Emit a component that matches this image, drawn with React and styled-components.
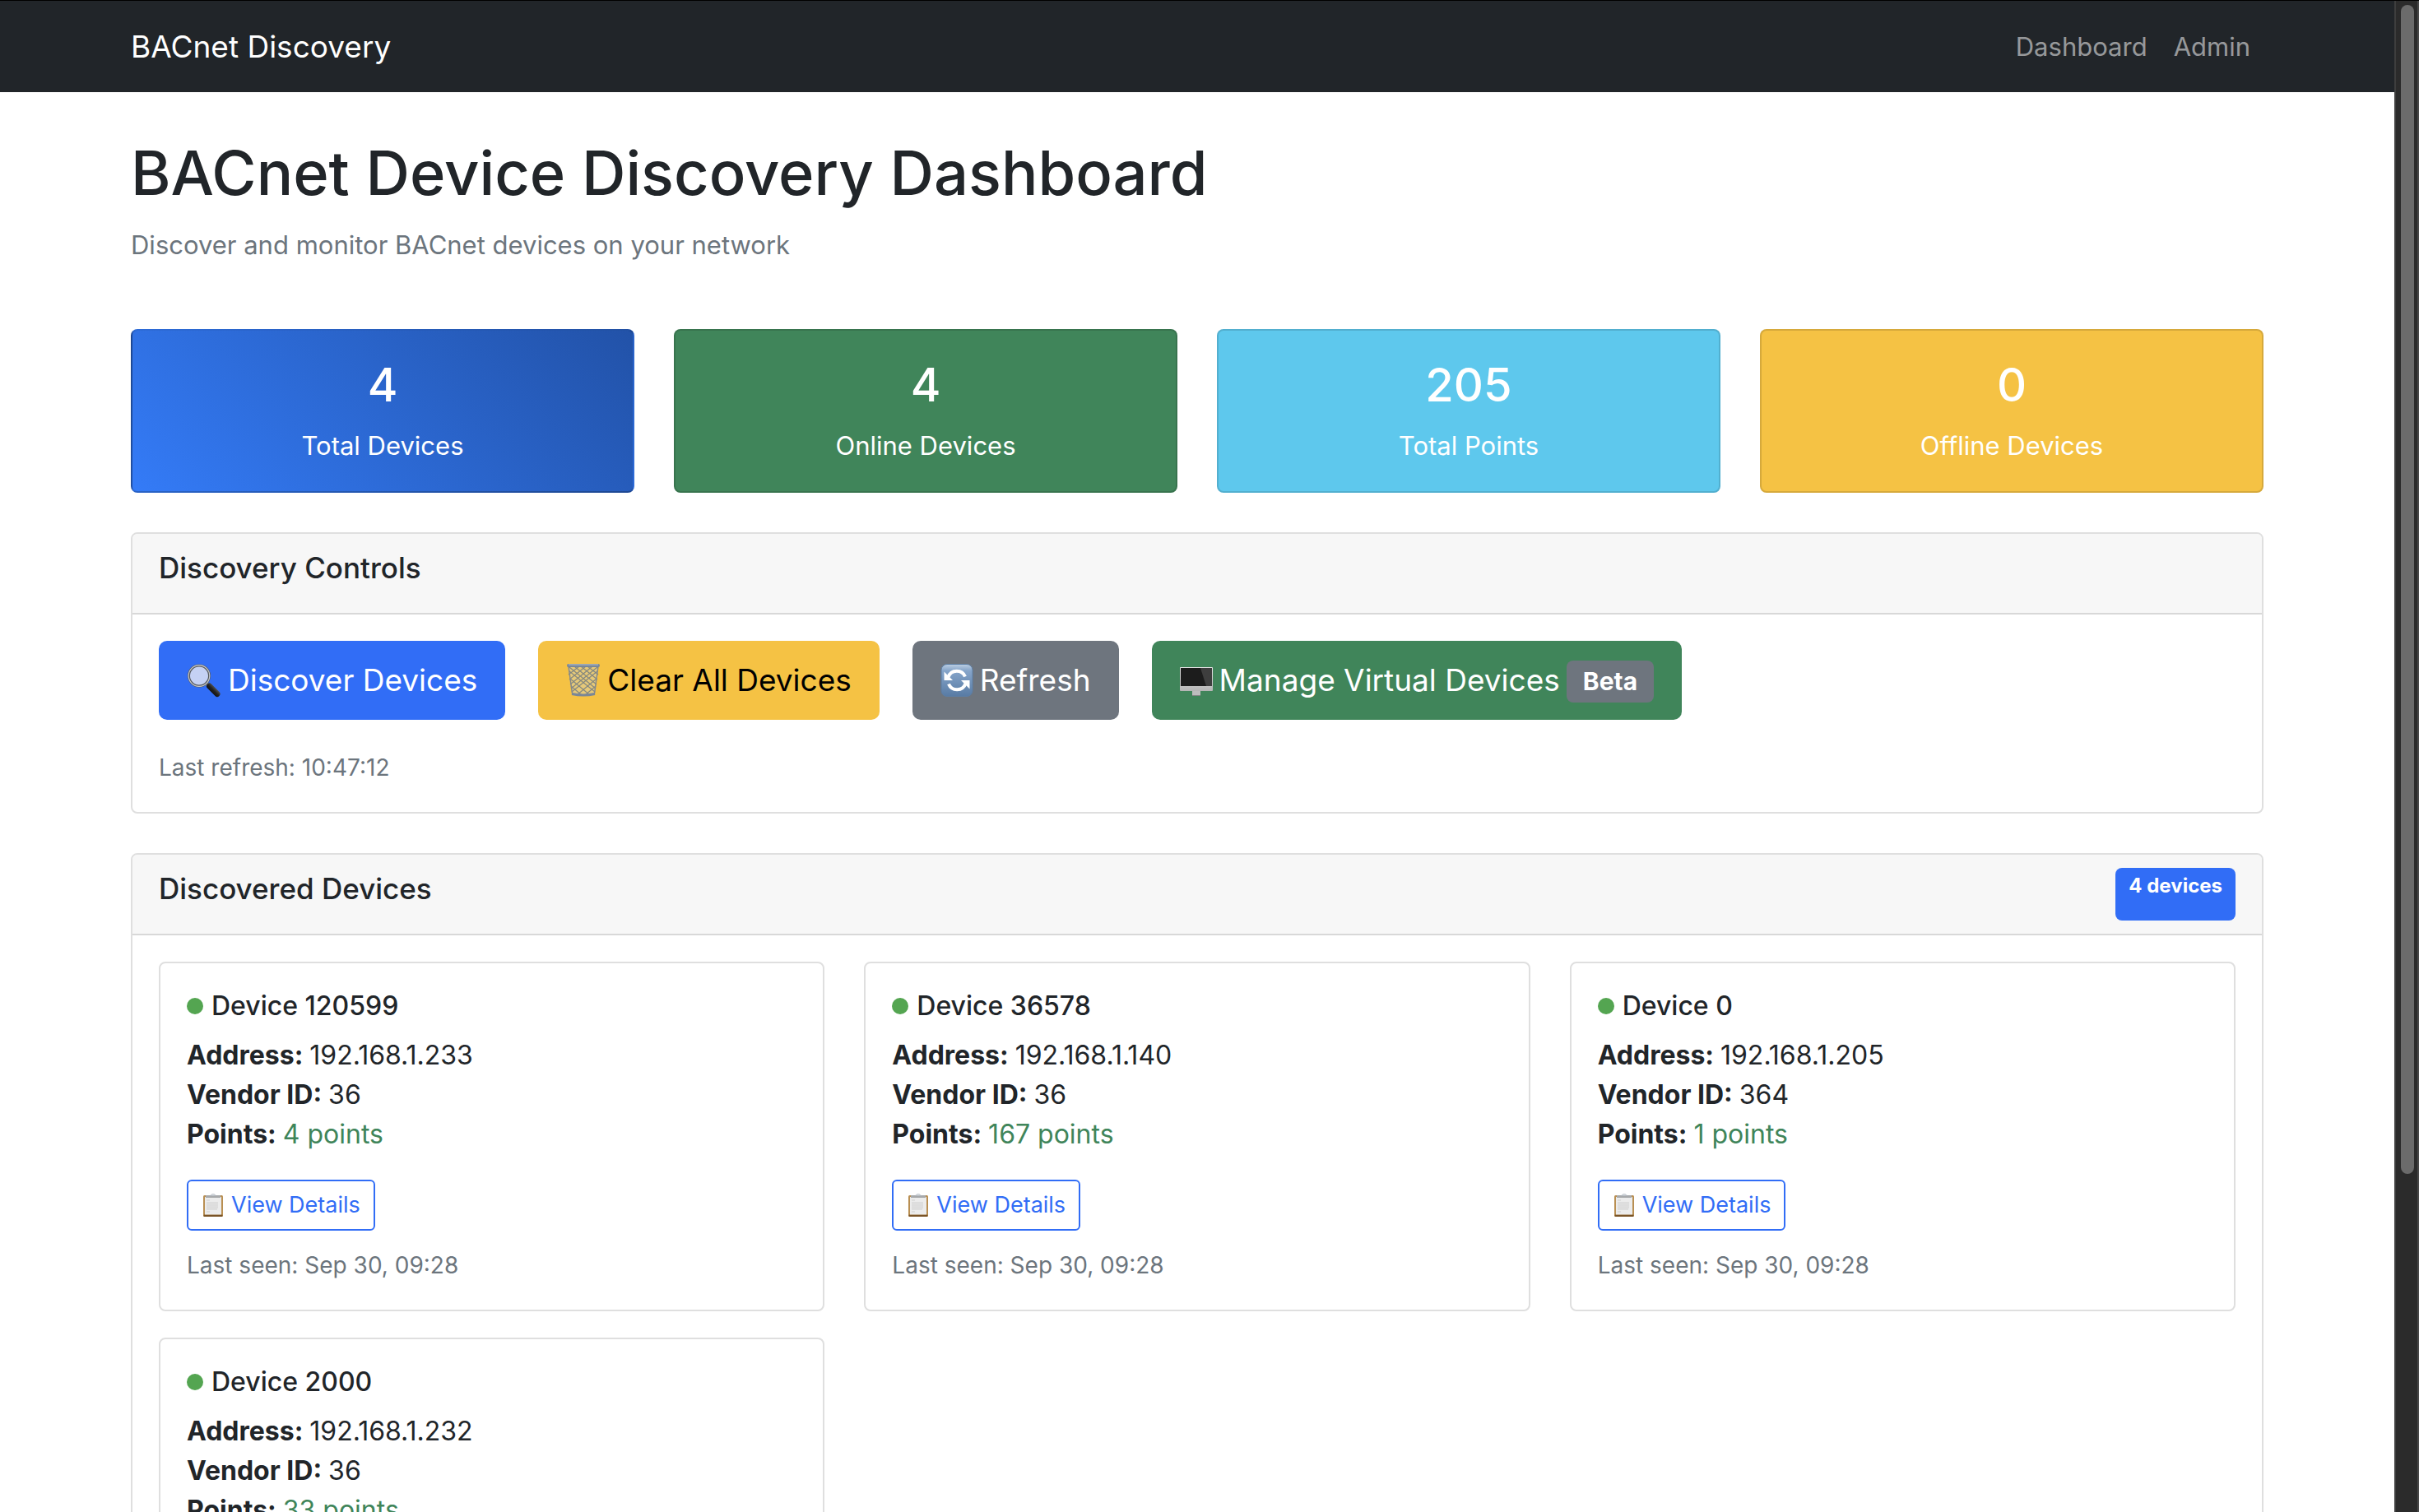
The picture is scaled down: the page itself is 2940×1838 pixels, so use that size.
import React from "react";
import styled, { createGlobalStyle } from "styled-components";

const Global = createGlobalStyle`
  *, *::before, *::after { box-sizing: border-box; }
  body {
    margin: 0;
    background: #fff;
    color: #212529;
    font-family: Inter, "Liberation Sans", sans-serif;
    font-size: 32px;
    line-height: 48px;
  }
  h1, h2, h3, p, dl, dd, ul { margin: 0; padding: 0; }
`;

const Window = styled.div`
  display: flex;
  height: 100vh;
  overflow: hidden;
  border-top: 1px solid #000;
`;

const Page = styled.div`
  flex: 1;
  min-width: 0;
  overflow: hidden;
`;

const ScrollTrack = styled.div`
  display: flex;
  flex-direction: column;
  width: 30px;
  padding: 5px 4px 5px 6px;
  background: #2b2b2b;
  border-left: 2px solid #3e3e3e;
  border-right: 2px solid #484848;
`;

const ScrollThumb = styled.div`
  height: 77.8%;
  border-radius: 8px;
  background: #6b6b6b;
`;

const Container = styled.div`
  width: 100%;
  max-width: 2640px;
  margin: 0 auto;
  padding: 0 24px;
`;

const Navbar = styled.nav`
  background: #212529;
`;

const NavRow = styled(Container)`
  display: flex;
  align-items: center;
  justify-content: space-between;
  height: 111px;
`;

const Brand = styled.a`
  color: #fff;
  font-size: 37px;
  line-height: 60px;
  text-decoration: none;
`;

const NavLinks = styled.div`
  display: flex;
`;

const NavLink = styled.a`
  padding: 16px;
  color: rgba(255, 255, 255, 0.55);
  font-size: 31px;
  text-decoration: none;
`;

const Main = styled(Container).attrs({ as: "main" })`
  padding-top: 50px;
`;

const PageTitle = styled.h1`
  margin-bottom: 16px;
  font-size: 74px;
  font-weight: 500;
  line-height: 96px;
`;

const Lead = styled.p`
  color: #6c757d;
  font-size: 31px;
`;

const Stats = styled.section`
  display: grid;
  grid-template-columns: repeat(4, 1fr);
  gap: 48px;
  margin: 78px 0 48px;
`;

const StatCard = styled.div`
  padding: 33px 32px 31px;
  border: 2px solid rgba(0, 0, 0, 0.125);
  border-radius: 8px;
  background: ${(p) => p.$fill};
  color: #fff;
  font-size: 31px;
  text-align: center;
`;

const StatValue = styled.h3`
  margin-bottom: 16px;
  font-size: 56px;
  font-weight: 500;
  line-height: 67px;
`;

const Panel = styled.section`
  margin-bottom: 48px;
  border: 2px solid #dfdfdf;
  border-radius: 8px;
  background: #fff;
`;

const PanelHeader = styled.header`
  display: flex;
  justify-content: space-between;
  padding: 16px 32px;
  border-bottom: 2px solid #d8d8d8;
  border-radius: 6px 6px 0 0;
  background: #f7f7f7;
`;

const PanelTitle = styled.h2`
  margin-bottom: 14px;
  font-size: 35px;
  font-weight: 500;
  line-height: 50px;
`;

const PanelBody = styled.div`
  padding: 32px;
`;

const Badge = styled.span`
  padding: 8px 16px;
  border-radius: 8px;
  background: #316df6;
  color: #fff;
  font-size: 24px;
  font-weight: 700;
  line-height: 28px;
`;

const BetaBadge = styled(Badge)`
  margin-top: 2px;
  padding: 10px 20px;
  background: #6e757e;
  font-size: 30px;
  line-height: 31px;
`;

const ButtonRow = styled.div`
  display: flex;
  flex-wrap: wrap;
  gap: 40px;
  margin-bottom: 32px;
`;

const Button = styled.button`
  display: flex;
  align-items: center;
  gap: 8px;
  height: 96px;
  padding: 0 34px;
  border: 0;
  border-radius: 10px;
  background: ${(p) => p.$fill};
  color: ${(p) => p.$ink || "#fff"};
  font: inherit;
  font-size: 37px;
`;

const Icon = styled.svg`
  flex: none;
  width: ${(p) => p.$size}px;
  height: ${(p) => p.$size}px;
`;

const Note = styled.p`
  padding-top: 4px;
  color: #6c757d;
  font-size: 28px;
  line-height: 44px;
`;

const DeviceGrid = styled.div`
  display: grid;
  grid-template-columns: repeat(3, 1fr);
  gap: 32px 48px;
`;

const DeviceCard = styled.article`
  padding: 32px;
  border: 2px solid #dfdfdf;
  border-radius: 8px;
`;

const DeviceName = styled.h3`
  display: flex;
  align-items: center;
  gap: 10px;
  margin-bottom: 17px;
  font-size: 32px;
  font-weight: 500;
  line-height: 39px;
`;

const StatusDot = styled.span`
  width: 20px;
  height: 20px;
  border-radius: 50%;
  background: #54a551;
`;

const Facts = styled.dl`
  margin-bottom: 31px;
`;

const Fact = styled.div`
  display: flex;
  gap: 8px;

  dt { font-weight: 700; }
`;

const Points = styled.dd`
  color: #40855a;
`;

const DetailsButton = styled.button`
  display: flex;
  align-items: center;
  gap: 8px;
  height: 62px;
  margin-bottom: 16px;
  padding: 0 16px;
  border: 2px solid #316df6;
  border-radius: 6px;
  background: #fff;
  color: #316df6;
  font: inherit;
  font-size: 27px;
`;

function SearchIcon() {
  return (
    <Icon $size={42} viewBox="0 0 42 42" aria-hidden="true">
      <defs>
        <linearGradient id="handle" x1="0" y1="1" x2="1" y2="0">
          <stop offset="0" stopColor="#050505" />
          <stop offset="0.5" stopColor="#222" />
          <stop offset="1" stopColor="#777" />
        </linearGradient>
      </defs>
      <path d="M24 25l4 4" stroke="#a5a5a5" strokeWidth="4" />
      <path d="M27.500 28l9.500 9.500" stroke="url(#handle)" strokeWidth="7" strokeLinecap="round" />
      <circle cx="15" cy="15.500" r="12.500" fill="#c5d1f4" stroke="#55585c" strokeWidth="3" />
      <circle cx="15" cy="15.500" r="12.800" fill="none" stroke="#c9cbce" strokeWidth="1.200" />
    </Icon>
  );
}

function TrashIcon() {
  return (
    <Icon $size={42} viewBox="0 0 42 42" aria-hidden="true">
      <path d="M3 4l4.500 33q13.500 3 27 0L39 4z" fill="#d8cfae" opacity="0.5" />
      <path
        d="M4 10l31 25M4 5l32 26M10 4l27 22M18 4l20 16M26 4l13 10M5 19l24 20M6 28l13 11M38 10L7 35M38 5L6 31M32 4L5 26M24 4L4 20M16 4L3 14M37 19L13 39M36 28L23 39"
        stroke="#85887f"
        strokeWidth="1.200"
        fill="none"
      />
      <path d="M3 4l4.500 33M39 4l-4.500 33" stroke="#85898c" strokeWidth="1.500" />
      <path d="M7 37.500q14 3 28 0" stroke="#7b8796" strokeWidth="3" fill="none" />
      <rect x="1" y="1" width="40" height="4" rx="2" fill="#78879a" />
      <path d="M3 2h36" stroke="#bcc6d0" strokeWidth="1" />
    </Icon>
  );
}

function RefreshIcon() {
  return (
    <Icon $size={40} viewBox="0 0 40 40" aria-hidden="true">
      <defs>
        <linearGradient id="tile" x1="0" y1="0" x2="0" y2="1">
          <stop offset="0" stopColor="#bccfe2" />
          <stop offset="0.2" stopColor="#86a5ca" />
          <stop offset="1" stopColor="#587ba4" />
        </linearGradient>
      </defs>
      <rect x="1" y="0.500" width="38" height="39" rx="7" fill="url(#tile)" stroke="#5d7ea4" />
      <path d="M9.500 16a11 11 0 0 1 20.500-.5" fill="none" stroke="#fff" strokeWidth="4" />
      <path d="M4.500 9.500v10.500h10.500z" fill="#fff" />
      <path d="M30.500 24a11 11 0 0 1-20.500 .5" fill="none" stroke="#fff" strokeWidth="4" />
      <path d="M35.500 30.500V20H25z" fill="#fff" />
    </Icon>
  );
}

function MonitorIcon() {
  return (
    <Icon $size={40} viewBox="0 0 40 40" aria-hidden="true">
      <defs>
        <linearGradient id="chin" x1="0" y1="0" x2="0" y2="1">
          <stop offset="0" stopColor="#e6e6e6" />
          <stop offset="1" stopColor="#b5b5b5" />
        </linearGradient>
      </defs>
      <rect x="15" y="32" width="10" height="7" fill="#bdbdbd" />
      <rect x="15" y="38" width="10" height="1" fill="#848484" />
      <rect x="0" y="4" width="40" height="29" rx="1" fill="url(#chin)" />
      <rect x="1" y="5" width="38" height="22" fill="#1c1c1c" />
      <path d="M25 5h14v22h-7z" fill="#3e3e3e" />
    </Icon>
  );
}

function ClipboardIcon() {
  return (
    <Icon $size={28} viewBox="0 0 28 28" aria-hidden="true">
      <rect x="2" y="2" width="24" height="26" rx="1.500" fill="#b98f52" />
      <rect x="2.500" y="25.500" width="23" height="2.500" rx="1" fill="#7a5427" />
      <rect x="4" y="4" width="20" height="21.500" fill="#ececec" />
      <path d="M6 8h4M6 11h14M6 13h14M6 15h14M6 17h14M6 19h13M6 22h4" stroke="#cfcfcf" />
      <rect x="5" y="2" width="18" height="3" fill="#a7a9ab" />
      <path d="M10 2.500q1.500 0 2-1.500 2-1.500 4 0 .5 1.500 2 1.500z" fill="#dfe3e8" stroke="#a9b0b8" strokeWidth="0.600" />
    </Icon>
  );
}

const stats = [
  { value: 4, label: "Total Devices", fill: "linear-gradient(45deg, #347bf7, #2252a8)" },
  { value: 4, label: "Online Devices", fill: "#40855a" },
  { value: 205, label: "Total Points", fill: "#5ec8ed" },
  { value: 0, label: "Offline Devices", fill: "#f5c244" },
];

const devices = [
  { id: 120599, address: "192.168.1.233", vendor: 36, points: 4 },
  { id: 36578, address: "192.168.1.140", vendor: 36, points: 167 },
  { id: 0, address: "192.168.1.205", vendor: 364, points: 1 },
  { id: 2000, address: "192.168.1.232", vendor: 36, points: 33 },
];

function Device({ device }) {
  return (
    <DeviceCard>
      <DeviceName>
        <StatusDot />
        Device {device.id}
      </DeviceName>
      <Facts>
        <Fact>
          <dt>Address:</dt>
          <dd>{device.address}</dd>
        </Fact>
        <Fact>
          <dt>Vendor ID:</dt>
          <dd>{device.vendor}</dd>
        </Fact>
        <Fact>
          <dt>Points:</dt>
          <Points>{device.points} points</Points>
        </Fact>
      </Facts>
      <DetailsButton type="button">
        <ClipboardIcon />
        View Details
      </DetailsButton>
      <Note>Last seen: Sep 30, 09:28</Note>
    </DeviceCard>
  );
}

export default function App() {
  return (
    <>
      <Global />
      <Window>
        <Page>
          <Navbar>
            <NavRow>
              <Brand href="#">BACnet Discovery</Brand>
              <NavLinks>
                <NavLink href="#dashboard">Dashboard</NavLink>
                <NavLink href="#admin">Admin</NavLink>
              </NavLinks>
            </NavRow>
          </Navbar>
          <Main>
            <PageTitle>BACnet Device Discovery Dashboard</PageTitle>
            <Lead>Discover and monitor BACnet devices on your network</Lead>
            <Stats>
              {stats.map((s) => (
                <StatCard key={s.label} $fill={s.fill}>
                  <StatValue>{s.value}</StatValue>
                  <p>{s.label}</p>
                </StatCard>
              ))}
            </Stats>
            <Panel>
              <PanelHeader>
                <PanelTitle>Discovery Controls</PanelTitle>
              </PanelHeader>
              <PanelBody>
                <ButtonRow>
                  <Button type="button" $fill="#316df6">
                    <SearchIcon />
                    Discover Devices
                  </Button>
                  <Button type="button" $fill="#f5c244" $ink="#000">
                    <TrashIcon />
                    Clear All Devices
                  </Button>
                  <Button type="button" $fill="#6e757e">
                    <RefreshIcon />
                    Refresh
                  </Button>
                  <Button type="button" $fill="#40855a">
                    <MonitorIcon />
                    Manage Virtual Devices
                    <BetaBadge>Beta</BetaBadge>
                  </Button>
                </ButtonRow>
                <Note>Last refresh: 10:47:12</Note>
              </PanelBody>
            </Panel>
            <Panel>
              <PanelHeader>
                <PanelTitle>Discovered Devices</PanelTitle>
                <Badge>4 devices</Badge>
              </PanelHeader>
              <PanelBody>
                <DeviceGrid>
                  {devices.map((d) => (
                    <Device key={d.id} device={d} />
                  ))}
                </DeviceGrid>
              </PanelBody>
            </Panel>
          </Main>
        </Page>
        <ScrollTrack>
          <ScrollThumb />
        </ScrollTrack>
      </Window>
    </>
  );
}
